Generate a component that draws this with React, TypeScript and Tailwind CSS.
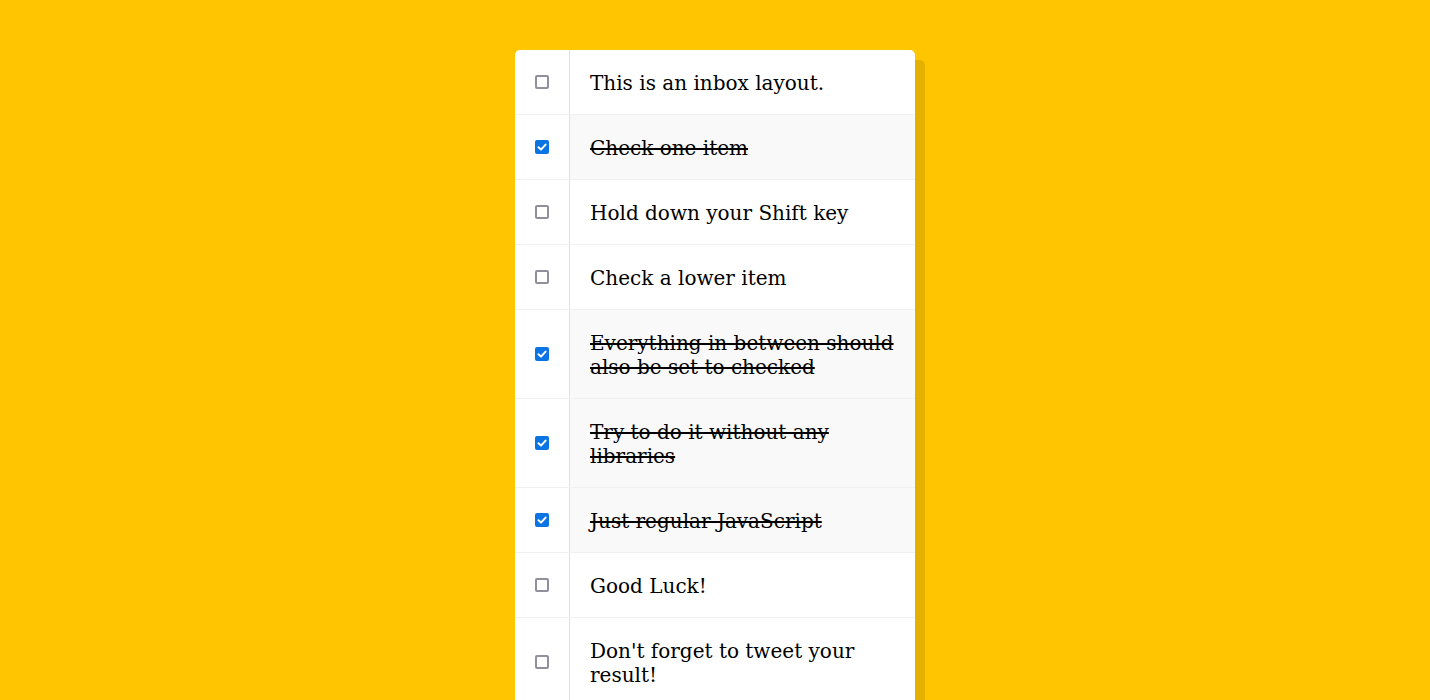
import React, { useState, useRef } from 'react';

const items = [
  { text: 'This is an inbox layout.', checked: false },
  { text: 'Check one item', checked: true },
  { text: 'Hold down your Shift key', checked: false },
  { text: 'Check a lower item', checked: false },
  { text: 'Everything in between should also be set to checked', checked: true },
  { text: 'Try to do it without any libraries', checked: true },
  { text: 'Just regular JavaScript', checked: true },
  { text: 'Good Luck!', checked: false },
  { text: "Don't forget to tweet your result!", checked: false },
];

export default function App() {
  const [checked, setChecked] = useState(items.map((i) => i.checked));
  const lastChecked = useRef<number | null>(null);

  const handleClick = (index: number, e: React.MouseEvent<HTMLInputElement>) => {
    const next = [...checked];
    const value = !next[index];
    next[index] = value;
    // shift-click checks everything between the last box and this one
    if (e.shiftKey && value && lastChecked.current !== null) {
      const start = Math.min(index, lastChecked.current);
      const end = Math.max(index, lastChecked.current);
      for (let i = start; i <= end; i++) next[i] = true;
    }
    if (value) lastChecked.current = index;
    setChecked(next);
  };

  return (
    <div className="min-h-[700px] bg-[#ffc600] pt-[50px] pb-[50px] font-['DejaVu_Serif',serif]">
      <div className="mx-auto max-w-[400px] bg-white rounded-[5px] shadow-[10px_10px_0_rgba(0,0,0,0.1)]">
        {items.map((item, i) => (
          <div key={i} className="flex items-center border-b border-[#f1f1f1]">
            <span className="relative m-5 w-[14px] h-[14px] shrink-0">
              <input
                type="checkbox"
                className={`absolute inset-0 m-0 w-[14px] h-[14px] appearance-none rounded-[2px] cursor-pointer ${
                  checked[i] ? 'bg-[#0b74e5]' : 'border-2 border-[#8f8f9d] bg-white'
                }`}
                checked={checked[i]}
                onChange={() => {}}
                onClick={(e) => handleClick(i, e)}
              />
              {checked[i] && (
                <svg
                  viewBox="0 0 14 14"
                  className="pointer-events-none absolute inset-0 w-[14px] h-[14px]"
                >
                  <path
                    d="M3.5 7.2 L6 9.6 L10.6 4.6"
                    fill="none"
                    stroke="white"
                    strokeWidth="2"
                    strokeLinecap="round"
                    strokeLinejoin="round"
                  />
                </svg>
              )}
            </span>
            <p
              className={`m-0 flex-1 self-stretch flex items-center p-5 pt-[21px] pb-[19px] text-[20px] leading-[normal] font-extralight text-black border-l border-[#d1e2ff] ${
                checked[i] ? 'bg-[#f9f9f9] line-through' : ''
              }`}
            >
              {item.text}
            </p>
          </div>
        ))}
      </div>
    </div>
  );
}
